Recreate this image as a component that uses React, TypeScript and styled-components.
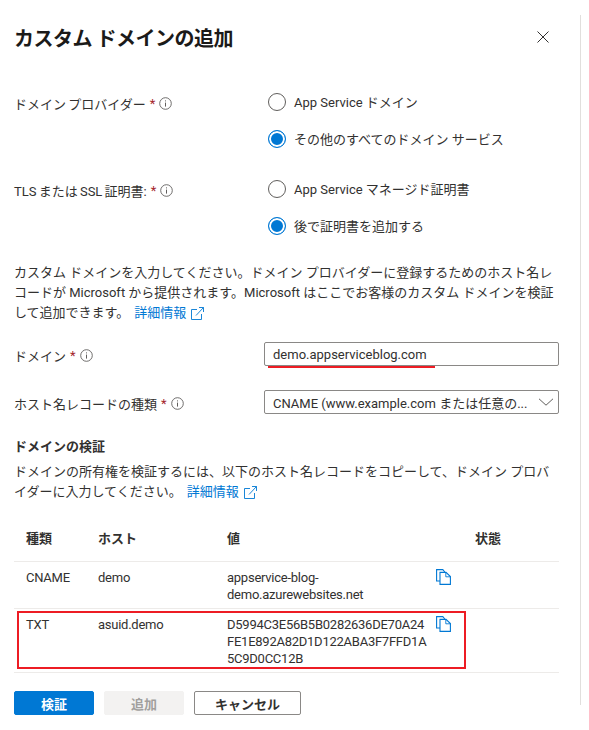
import { ReactNode } from "react"
import styled, { createGlobalStyle } from "styled-components"

const GlobalStyle = createGlobalStyle`
    html, body {
        margin: 0;
        background: #fff;
    }
    body {
        font-family: Roboto, "Noto Sans CJK JP", sans-serif;
        font-size: 13px;
        color: #323130;
    }
`

const Page = styled.div`
    display: flex;
    height: 730px;
    overflow: hidden;
`

const Sheet = styled.div`
    flex: none;
    width: 545px;
    margin-left: 14px;
`

const Divider = styled.div`
    flex: none;
    width: 1px;
    height: 690px;
    margin: 15px 0 0 21px;
    background: #e1dfdd;
`

const Header = styled.header`
    display: flex;
    justify-content: space-between;
    align-items: center;
    height: 44px;
    margin-top: 15px;
    margin-bottom: 31px;
`

const Title = styled.h1`
    margin: 0;
    font-size: 20px;
    font-weight: 700;
    letter-spacing: -0.5px;
    color: #1b1a19;
`

const CloseButton = styled.button`
    display: flex;
    border: 0;
    padding: 0;
    margin-right: 10px;
    background: none;
    color: #323130;
`

const FormRow = styled.div<{ $gap?: number }>`
    display: grid;
    grid-template-columns: 254px 291px;
    margin-bottom: ${p => p.$gap ?? 0}px;
`

const Label = styled.div`
    display: flex;
    align-items: center;
    gap: 4px;
    box-sizing: border-box;
    height: 24px;
    padding-top: 2px;
    white-space: nowrap;
    word-spacing: -1px;
`

const Star = styled.span`
    color: #a4262c;
`

const RadioGroup = styled.div`
    display: flex;
    flex-direction: column;
    gap: 13px;
`

const RadioRow = styled.div`
    display: flex;
    align-items: center;
    gap: 8px;
    height: 24px;
`

const RadioMark = styled.span<{ $checked?: boolean }>`
    flex: none;
    width: 18px;
    height: 18px;
    box-sizing: border-box;
    border-radius: 50%;
    border: 1px solid ${p => (p.$checked ? "#0078d4" : "#605e5c")};
    background: ${p => (p.$checked ? "#0078d4" : "#fff")};
    box-shadow: ${p => (p.$checked ? "inset 0 0 0 2px #fff" : "none")};
`

const RadioText = styled.span`
    padding-bottom: 2px;
`

const Paragraph = styled.p<{ $gap?: number }>`
    margin: 0 0 ${p => p.$gap ?? 0}px;
    line-height: 20px;
`

const Link = styled.a`
    display: inline-flex;
    align-items: center;
    gap: 5px;
    margin-left: 5px;
    color: #0078d4;
`

const Field = styled.div`
    display: flex;
    justify-content: space-between;
    align-items: center;
    box-sizing: border-box;
    height: 24px;
    margin-left: -4px;
    padding: 0 4px 0 8px;
    border: 1px solid #8a8886;
    border-radius: 2px;
    white-space: nowrap;
`

const Underlined = styled.div`
    position: relative;
`

const RedUnderline = styled.span`
    position: absolute;
    left: 0;
    top: 24px;
    width: 167px;
    height: 2px;
    background: #ed1c24;
`

const SectionTitle = styled.h2`
    margin: 0 0 5px;
    font-size: 13px;
    font-weight: 700;
    line-height: 20px;
`

const Table = styled.div`
    margin-top: 21px;
`

const TableRow = styled.div<{ $padding: string }>`
    display: grid;
    grid-template-columns: 72px 129px 221px 27px 95px;
    padding: ${p => p.$padding};
    border-bottom: 1px solid #edebe9;
    line-height: 17px;
    position: relative;
`

const Cell = styled.div`
    padding-left: 12px;
    white-space: nowrap;
    letter-spacing: -0.25px;
`

const HeadCell = styled(Cell)`
    font-weight: 700;
    line-height: 20px;
    letter-spacing: 0;
`

const HighlightBox = styled.span`
    position: absolute;
    left: 3px;
    top: 2px;
    bottom: 3px;
    width: 449px;
    border: 2px solid #ed1c24;
    box-sizing: border-box;
    pointer-events: none;
`

const Footer = styled.div`
    display: flex;
    gap: 10px;
    margin-top: 18px;
`

const Button = styled.button<{ $kind: "primary" | "disabled" | "default" }>`
    height: 24px;
    box-sizing: border-box;
    width: ${p => (p.$kind === "default" ? "107px" : "80px")};
    border-radius: 2px;
    font-family: inherit;
    font-size: 13px;
    font-weight: 700;
    padding: 0;
    border: 1px solid
        ${p => (p.$kind === "primary" ? "#0078d4" : p.$kind === "disabled" ? "#f3f2f1" : "#8a8886")};
    background: ${p => (p.$kind === "primary" ? "#0078d4" : p.$kind === "disabled" ? "#f3f2f1" : "#fff")};
    color: ${p => (p.$kind === "primary" ? "#fff" : p.$kind === "disabled" ? "#a19f9d" : "#323130")};
`

function InfoIcon() {
    return (
        <svg width="13" height="13" viewBox="0 0 13 13" fill="none" stroke="#605e5c">
            <circle cx="6.5" cy="6.5" r="5.8" strokeWidth="0.9" />
            <path d="M6.5 5.6v4M6.5 3.4v1" strokeWidth="1" />
        </svg>
    )
}

function ExternalIcon() {
    return (
        <svg width="13" height="13" viewBox="0 0 13 13" fill="none" stroke="#0078d4" strokeWidth="0.9">
            <path d="M6 2.5H.5v10h10V7" />
            <path d="M5 8.5 12.5.5M8 .5h4.5V5" />
        </svg>
    )
}

function CopyIcon() {
    return (
        <svg width="15" height="16" viewBox="0 0 15 16" fill="none" stroke="#0078d4" strokeWidth="1.1">
            <path d="M4 12H.6V.6h6.2l2 2.4" />
            <path d="M4 3.4h6l4.4 4.2v7.8H4z" />
            <path d="M9.8 3.4v4.4h4.6" strokeWidth="0.9" />
        </svg>
    )
}

function FieldLabel({ text, colon }: { text: string; colon?: boolean }) {
    return (
        <Label>
            <span>{text}{colon ? ":" : ""}</span>
            <Star>*</Star>
            <InfoIcon />
        </Label>
    )
}

function Radio({ checked, children }: { checked?: boolean; children: ReactNode }) {
    return (
        <RadioRow>
            <RadioMark $checked={checked} />
            <RadioText>{children}</RadioText>
        </RadioRow>
    )
}

function MoreLink() {
    return (
        <Link>
            詳細情報
            <ExternalIcon />
        </Link>
    )
}

export default function App() {
    return (
        <Page>
            <GlobalStyle />
            <Sheet>
                <Header>
                    <Title>カスタム ドメインの追加</Title>
                    <CloseButton>
                        <svg width="12" height="12" viewBox="0 0 12 12" stroke="currentColor" strokeWidth="1">
                            <path d="M.5.5l11 11M11.5.5l-11 11" />
                        </svg>
                    </CloseButton>
                </Header>

                <FormRow $gap={26}>
                    <FieldLabel text="ドメイン プロバイダー" />
                    <RadioGroup>
                        <Radio>App Service ドメイン</Radio>
                        <Radio checked>その他のすべてのドメイン サービス</Radio>
                    </RadioGroup>
                </FormRow>
                <FormRow $gap={25}>
                    <FieldLabel text="TLS または SSL 証明書" colon />
                    <RadioGroup>
                        <Radio>App Service マネージド証明書</Radio>
                        <Radio checked>後で証明書を追加する</Radio>
                    </RadioGroup>
                </FormRow>

                <Paragraph $gap={19}>
                    カスタム ドメインを入力してください。ドメイン プロバイダーに登録するためのホスト名レコードが Microsoft から提供されます。Microsoft はここでお客様のカスタム ドメインを検証して追加できます。
                    <MoreLink />
                </Paragraph>

                <FormRow $gap={24}>
                    <FieldLabel text="ドメイン" />
                    <Underlined>
                        <Field>demo.appserviceblog.com</Field>
                        <RedUnderline />
                    </Underlined>
                </FormRow>
                <FormRow $gap={23}>
                    <FieldLabel text="ホスト名レコードの種類" />
                    <Field>
                        <span>CNAME (www.example.com または任意の...</span>
                        <svg width="16" height="8" viewBox="0 0 16 8" fill="none" stroke="#605e5c">
                            <path d="M1 .8l7 6.4 7-6.4" />
                        </svg>
                    </Field>
                </FormRow>

                <SectionTitle>ドメインの検証</SectionTitle>
                <Paragraph>
                    ドメインの所有権を検証するには、以下のホスト名レコードをコピーして、ドメイン プロバイダーに入力してください。
                    <MoreLink />
                </Paragraph>

                <Table>
                    <TableRow $padding="6px 0 12px">
                        <HeadCell>種類</HeadCell>
                        <HeadCell>ホスト</HeadCell>
                        <HeadCell>値</HeadCell>
                        <div />
                        <HeadCell>状態</HeadCell>
                    </TableRow>
                    <TableRow $padding="7px 0 5px">
                        <Cell>CNAME</Cell>
                        <Cell>demo</Cell>
                        <Cell>appservice-blog-<br />demo.azurewebsites.net</Cell>
                        <CopyIcon />
                        <div />
                    </TableRow>
                    <TableRow $padding="7px 0 5px">
                        <Cell>TXT</Cell>
                        <Cell>asuid.demo</Cell>
                        <Cell>D5994C3E56B5B0282636DE70A24<br />FE1E892A82D1D122ABA3F7FFD1A<br />5C9D0CC12B</Cell>
                        <CopyIcon />
                        <div />
                        <HighlightBox />
                    </TableRow>
                </Table>

                <Footer>
                    <Button $kind="primary">検証</Button>
                    <Button $kind="disabled">追加</Button>
                    <Button $kind="default">キャンセル</Button>
                </Footer>
            </Sheet>
            <Divider />
        </Page>
    )
}
